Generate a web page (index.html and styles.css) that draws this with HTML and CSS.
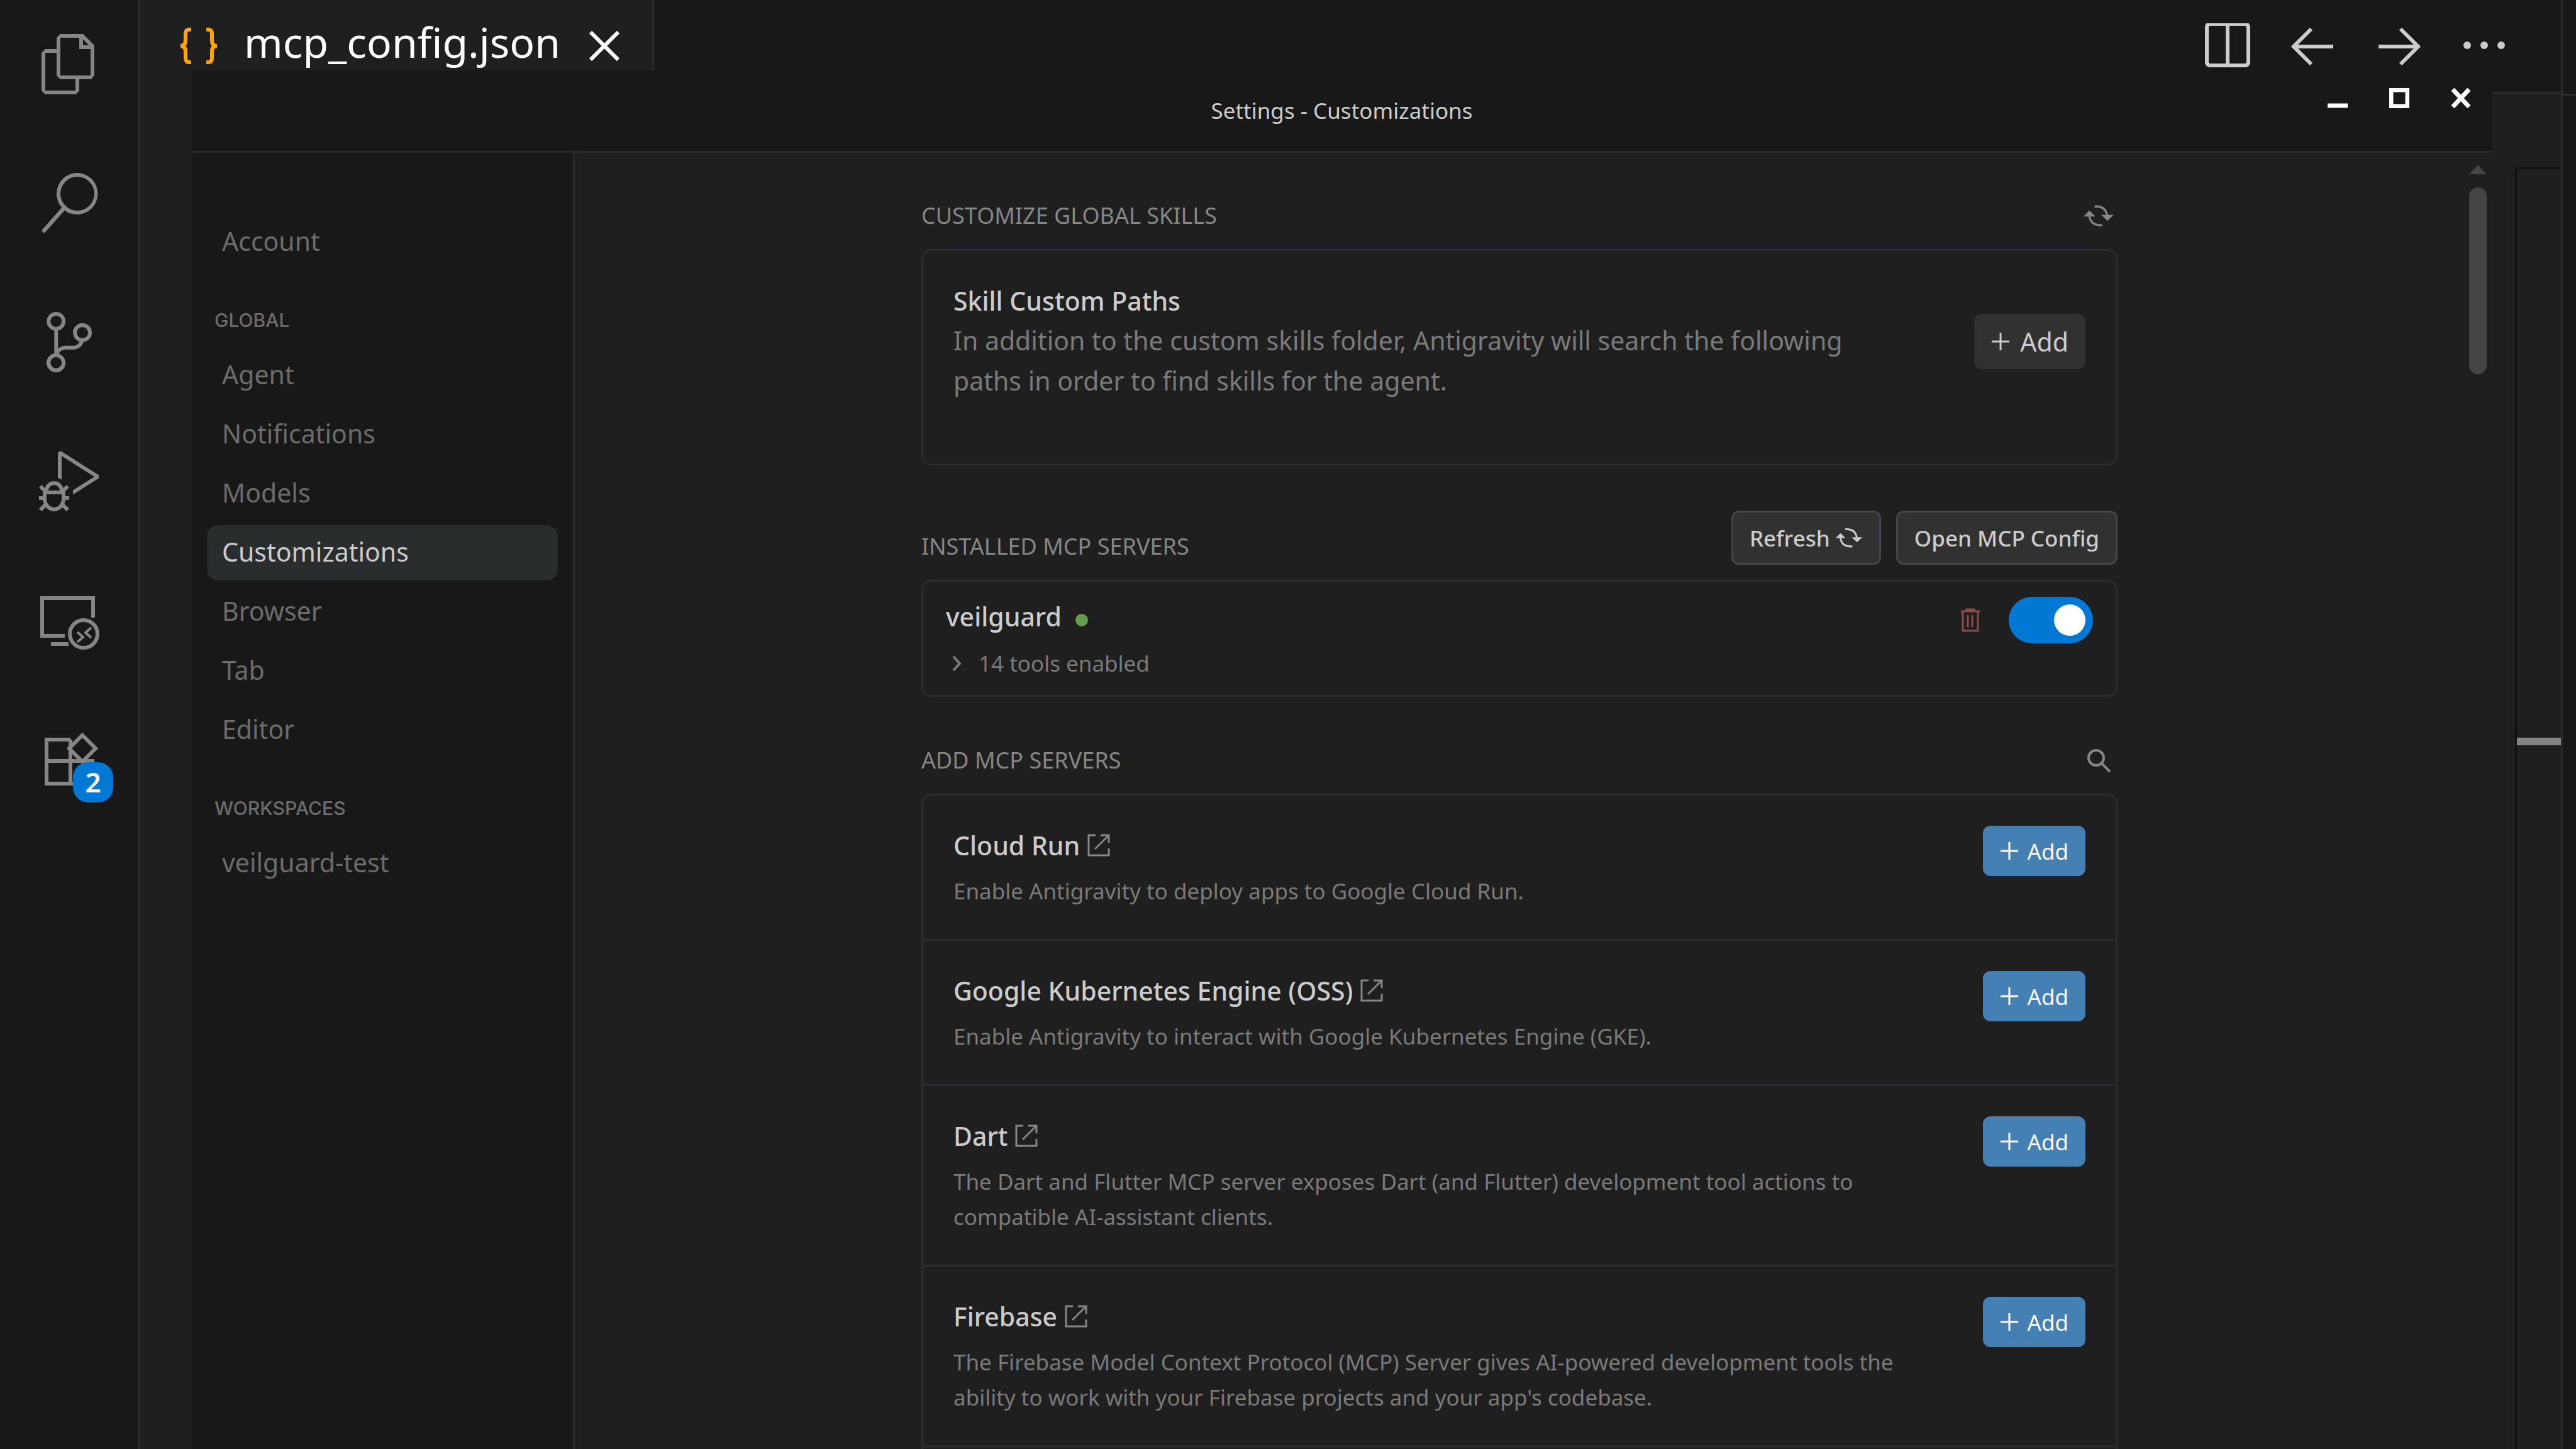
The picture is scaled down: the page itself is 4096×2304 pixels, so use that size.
FILE: index.html
```html
<!DOCTYPE html>
<html lang="en">
<head>
    <meta charset="UTF-8">
    <meta name="viewport" content="width=device-width, initial-scale=1.0">
    <title>Settings - Customizations</title>
    <link rel="stylesheet" href="styles.css">
</head>
<body>
<!-- shared icons -->
<svg class="sprite" aria-hidden="true">
    <symbol id="refresh" viewBox="26 34 216 216">
        <path d="M105 76 Q182 70 195 140 M160 210 Q76 214 68 145" fill="none" stroke="currentColor" stroke-width="15"/>
        <path d="M156 138H238L197 177z M29 146H107L68 106z" fill="currentColor"/>
    </symbol>
    <symbol id="external" viewBox="0 0 36 36">
        <path d="M13 2H2V34H34V23 M21 2H34V14 M34 2L12 24" fill="none" stroke="currentColor" stroke-width="3"/>
    </symbol>
    <symbol id="plus" viewBox="0 0 30 30">
        <path d="M15 1V29M1 15H29" fill="none" stroke="currentColor" stroke-width="3"/>
    </symbol>
</svg>

<div class="workbench">
    <nav class="activity-bar">
        <button class="activity" aria-label="Explorer">
            <svg viewBox="0 0 24 24"><path d="M17.5 0h-9L7 1.5V6H2.5L1 7.5v15.07L2.5 24h12.07L16 22.57V18h4.7l1.3-1.43V4.5L17.5 0zm0 2.12l2.38 2.38H17.5V2.12zm-3 20.38h-12v-15H7v9.07L8.5 18h6v4.5zm6-6h-12v-15H16V6h4.5v10.5z"/></svg>
        </button>
        <button class="activity" aria-label="Search">
            <svg viewBox="0 0 24 24"><path d="M15.25 0a8.25 8.25 0 0 0-6.18 13.72L1 22.88l1.12 1.12 8.05-9.12A8.251 8.251 0 1 0 15.25.01V0zm0 15a6.75 6.75 0 1 1 0-13.5 6.75 6.75 0 0 1 0 13.5z"/></svg>
        </button>
        <button class="activity" aria-label="Source Control">
            <svg viewBox="0 0 24 24"><path d="M21.007 8.222A3.738 3.738 0 0 0 15.045 5.2a3.737 3.737 0 0 0 1.156 6.583 2.988 2.988 0 0 1-2.668 1.67h-2.99a4.456 4.456 0 0 0-2.989 1.165V7.4a3.737 3.737 0 1 0-1.494 0v9.117a3.776 3.776 0 1 0 1.816.099 2.99 2.99 0 0 1 2.668-1.667h2.99a4.484 4.484 0 0 0 4.223-3.039 3.736 3.736 0 0 0 3.25-3.687zM4.565 3.738a2.242 2.242 0 1 1 4.484 0 2.242 2.242 0 0 1-4.484 0zm4.484 16.441a2.242 2.242 0 1 1-4.484 0 2.242 2.242 0 0 1 4.484 0zm8.221-9.715a2.242 2.242 0 1 1 0-4.485 2.242 2.242 0 0 1 0 4.485z"/></svg>
        </button>
        <button class="activity" aria-label="Run and Debug">
            <svg viewBox="0 0 24 24"><path d="M10.94 13.5l-1.32 1.32a3.73 3.73 0 0 0-7.24 0L1.06 13.5 0 14.56l1.72 1.72-.22.22V18H0v1.5h1.5v.08c.077.489.214.966.41 1.42L0 22.94 1.06 24l1.65-1.65A4.308 4.308 0 0 0 6 24a4.31 4.31 0 0 0 3.29-1.65L10.94 24 12 22.94 10.09 21c.198-.464.336-.951.41-1.45v-.1H12V18h-1.5v-1.5l-.22-.22L12 14.56l-1.06-1.06zM6 13.5a2.25 2.25 0 0 1 2.25 2.25h-4.5A2.25 2.25 0 0 1 6 13.5zm3 6a3.33 3.33 0 0 1-3 3 3.33 3.33 0 0 1-3-3v-2.25h6v2.25zm14.76-9.9v1.26L13.5 17.37V15.6l8.5-5.37L9 2v9.46a5.07 5.07 0 0 0-1.5-.72V.63L8.64 0l15.12 9.6z"/></svg>
        </button>
        <button class="activity" aria-label="Remote Explorer">
            <svg class="line" viewBox="0 0 96 96">
                <path d="M86 44V13H5V73H41 M19 86H47" stroke-width="6"/>
                <circle cx="71" cy="70" r="22" stroke-width="6"/>
                <path d="M61 67L70 75L61 83 M83 60L74 68L83 76" stroke-width="4"/>
            </svg>
        </button>
        <button class="activity" aria-label="Extensions">
            <svg class="line" viewBox="0 0 96 96">
                <path d="M50 17H12V87H85V51H12 M50 17V87" stroke-width="6"/>
                <path d="M69 10L90 31L69 52L48 31z" stroke-width="6"/>
            </svg>
            <span class="badge">2</span>
        </button>
    </nav>

    <main class="editor">
        <div class="tab-bar">
            <div class="tab">
                <svg class="braces" viewBox="0 0 64 58"><path d="M20 3H17Q11 3 11 10V20Q11 29 3 29Q11 29 11 38V48Q11 55 17 55H20 M44 3H47Q53 3 53 10V20Q53 29 61 29Q53 29 53 38V48Q53 55 47 55H44"/></svg>
                <span class="tab-name">mcp_config.json</span>
                <button class="tab-close" aria-label="Close tab">
                    <svg viewBox="0 0 48 48"><path d="M2 2L46 46M46 2L2 46"/></svg>
                </button>
            </div>
            <div class="editor-actions">
                <button aria-label="Split editor"><svg viewBox="0 0 72 72"><rect x="3" y="1" width="66" height="66" rx="5"/><path d="M36 1V67"/></svg></button>
                <button aria-label="Back"><svg viewBox="0 0 72 72"><path d="M68 37H6M33 9L5 37L33 65"/></svg></button>
                <button aria-label="Forward"><svg viewBox="0 0 72 72"><path d="M4 37H66M39 9L67 37L39 65"/></svg></button>
                <button aria-label="More"><svg viewBox="0 0 72 72"><g class="dots"><circle cx="9" cy="35" r="6"/><circle cx="36" cy="35" r="6"/><circle cx="63" cy="35" r="6"/></g></svg></button>
            </div>
        </div>
        <div class="editor-body">
            <div class="ruler"><div class="ruler-mark"></div></div>
        </div>
    </main>
    <aside class="side-strip"></aside>
</div>

<section class="dialog" role="dialog" aria-labelledby="dialog-title">
    <header class="title-bar">
        <h1 id="dialog-title">Settings - Customizations</h1>
        <div class="window-buttons">
            <button aria-label="Minimize"><svg viewBox="0 0 32 32"><path d="M0 28H32"/></svg></button>
            <button aria-label="Maximize"><svg viewBox="0 0 32 32"><path d="M3 3H29V29H3z"/></svg></button>
            <button aria-label="Close"><svg viewBox="0 0 32 32"><path d="M3 2L29 30M29 2L3 30"/></svg></button>
        </div>
    </header>
    <div class="dialog-body">
        <nav class="sidebar">
            <a class="nav-item" href="#">Account</a>
            <h2>GLOBAL</h2>
            <a class="nav-item" href="#">Agent</a>
            <a class="nav-item" href="#">Notifications</a>
            <a class="nav-item" href="#">Models</a>
            <a class="nav-item active" href="#">Customizations</a>
            <a class="nav-item" href="#">Browser</a>
            <a class="nav-item" href="#">Tab</a>
            <a class="nav-item" href="#">Editor</a>
            <h2>WORKSPACES</h2>
            <a class="nav-item" href="#">veilguard-test</a>
        </nav>

        <div class="content">
            <section class="group">
                <div class="group-header">
                    <h2>CUSTOMIZE GLOBAL SKILLS</h2>
                    <button class="icon-button" aria-label="Reload skills"><svg><use href="#refresh"/></svg></button>
                </div>
                <div class="card skills">
                    <div class="card-text">
                        <h3>Skill Custom Paths</h3>
                        <p>In addition to the custom skills folder, Antigravity will search the following paths in order to find skills for the agent.</p>
                    </div>
                    <button class="add-path"><svg><use href="#plus"/></svg>Add</button>
                </div>
            </section>

            <section class="group">
                <div class="group-header">
                    <h2>INSTALLED MCP SERVERS</h2>
                    <div class="header-buttons">
                        <button class="secondary">Refresh<svg><use href="#refresh"/></svg></button>
                        <button class="secondary">Open MCP Config</button>
                    </div>
                </div>
                <div class="card installed">
                    <div class="server-row">
                        <label class="server-name" for="veilguard">veilguard</label>
                        <span class="status"></span>
                        <button class="trash" aria-label="Remove veilguard">
                            <svg viewBox="0 0 30 38"><path d="M0 5H30M9 5V2H21V5M3 5V36H27V5M11 11V30M18 11V30"/></svg>
                        </button>
                        <input type="checkbox" class="toggle" id="veilguard" checked>
                    </div>
                    <button class="tools">
                        <svg viewBox="0 0 14 26"><path d="M2 2L12 13L2 24"/></svg>14 tools enabled
                    </button>
                </div>
            </section>

            <section class="group">
                <div class="group-header">
                    <h2>ADD MCP SERVERS</h2>
                    <button class="icon-button" aria-label="Search servers">
                        <svg viewBox="0 0 48 48"><circle cx="20" cy="20" r="12"/><path d="M28 28L42 42"/></svg>
                    </button>
                </div>
                <ul class="card server-list">
                    <li>
                        <div class="card-text">
                            <h3><a href="#">Cloud Run<svg><use href="#external"/></svg></a></h3>
                            <p>Enable Antigravity to deploy apps to Google Cloud Run.</p>
                        </div>
                        <button class="add"><svg><use href="#plus"/></svg>Add</button>
                    </li>
                    <li>
                        <div class="card-text">
                            <h3><a href="#">Google Kubernetes Engine (OSS)<svg><use href="#external"/></svg></a></h3>
                            <p>Enable Antigravity to interact with Google Kubernetes Engine (GKE).</p>
                        </div>
                        <button class="add"><svg><use href="#plus"/></svg>Add</button>
                    </li>
                    <li>
                        <div class="card-text">
                            <h3><a href="#">Dart<svg><use href="#external"/></svg></a></h3>
                            <p>The Dart and Flutter MCP server exposes Dart (and Flutter) development tool actions to compatible AI-assistant clients.</p>
                        </div>
                        <button class="add"><svg><use href="#plus"/></svg>Add</button>
                    </li>
                    <li>
                        <div class="card-text">
                            <h3><a href="#">Firebase<svg><use href="#external"/></svg></a></h3>
                            <p>The Firebase Model Context Protocol (MCP) Server gives AI-powered development tools the ability to work with your Firebase projects and your app's codebase.</p>
                        </div>
                        <button class="add"><svg><use href="#plus"/></svg>Add</button>
                    </li>
                </ul>
            </section>
        </div>

        <div class="scrollbar">
            <div class="scroll-up"></div>
            <div class="scroll-thumb"></div>
        </div>
    </div>
</section>
</body>
</html>
```
FILE: styles.css
```css
* {
    box-sizing: border-box;
}

body {
    margin: 0;
    height: 100vh;
    overflow: hidden;
    position: relative;
    font-family: "Noto Sans", "Open Sans", sans-serif;
    background-color: #1f1f1f;
    color: #cccccc;
}

h1, h2, h3, p, ul {
    margin: 0;
    padding: 0;
    font-weight: 400;
}

a {
    color: inherit;
    text-decoration: none;
}

button {
    display: flex;
    align-items: center;
    justify-content: center;
    padding: 0;
    border: none;
    background: none;
    color: inherit;
    font: inherit;
    cursor: pointer;
}

.sprite {
    display: none;
}

/* Editor window */
.workbench {
    display: flex;
    height: 100%;
}

.activity-bar {
    width: 222px;
    padding-top: 54px;
    display: flex;
    flex-direction: column;
    gap: 125px;
    background-color: #181818;
    border-right: 3px solid #2b2b2b;
}

.activity {
    position: relative;
    color: #868686;
}

.activity svg {
    width: 96px;
    height: 96px;
    fill: currentColor;
}

.activity svg.line {
    fill: none;
    stroke: currentColor;
}

.badge {
    position: absolute;
    left: 116px;
    top: 53px;
    width: 64px;
    height: 64px;
    line-height: 62px;
    border-radius: 24px;
    background-color: #0078d4;
    color: #ffffff;
    font-size: 44px;
    font-weight: 600;
    text-align: center;
}

.editor {
    flex: 1;
    display: flex;
    flex-direction: column;
}

.tab-bar {
    height: 149px;
    display: flex;
    justify-content: space-between;
    background-color: #181818;
    border-bottom: 3px solid #2b2b2b;
}

/* the open tab runs over the bar's bottom border */
.tab {
    display: flex;
    align-items: center;
    margin-bottom: -3px;
    padding: 0 52px 4px 62px;
    background-color: #1f1f1f;
    border-right: 3px solid #2b2b2b;
    color: #ffffff;
}

.braces {
    width: 64px;
    height: 58px;
    fill: none;
    stroke: #ffa409;
    stroke-width: 6;
}

.tab-name {
    margin: 0 46px 0 40px;
    padding-bottom: 14px;
    font-size: 66px;
    line-height: 128px;
}

.tab-close svg {
    width: 48px;
    height: 48px;
    stroke: #ffffff;
    stroke-width: 6;
}

.editor-actions {
    display: flex;
    padding-right: 54px;
}

.editor-actions button {
    width: 136px;
}

.editor-actions svg {
    width: 72px;
    height: 72px;
    fill: none;
    stroke: #cccccc;
    stroke-width: 6;
}

.editor-actions .dots {
    fill: #cccccc;
    stroke: none;
}

.editor-body {
    flex: 1;
    padding-top: 117px;
    display: flex;
    justify-content: flex-end;
}

.ruler {
    width: 73px;
    padding-top: 904px;
    border-left: 3px solid #0f1012;
    border-top: 3px solid #0f1012;
}

.ruler-mark {
    height: 12px;
    background-color: #848482;
}

.side-strip {
    width: 24px;
    background-color: #181818;
    border-left: 3px solid #2b2b2b;
}

.side-strip::before {
    content: '';
    display: block;
    height: 149px;
    border-bottom: 3px solid #2b2b2b;
}

/* Settings window, floats over the editor */
.dialog {
    position: absolute;
    left: 305px;
    right: 134px;
    top: 112px;
    bottom: 0;
    display: flex;
    flex-direction: column;
    background-color: #1f1f1f;
    overflow: hidden;
}

.title-bar {
    display: grid;
    grid-template-columns: 1fr auto 1fr;
    background-color: #181818;
    border-bottom: 3px solid #2b2c2f;
}

.title-bar h1 {
    grid-column: 2;
    font-size: 35px;
    line-height: 128px;
}

.window-buttons {
    display: flex;
    justify-content: flex-end;
    align-items: flex-start;
}

.window-buttons button {
    width: 98px;
    height: 88px;
}

.window-buttons svg {
    width: 32px;
    height: 32px;
    fill: none;
    stroke: #ffffff;
    stroke-width: 7;
}

.dialog-body {
    flex: 1;
    min-height: 0;
    display: flex;
}

.sidebar {
    width: 609px;
    padding: 98px 24px 0;
    display: flex;
    flex-direction: column;
    gap: 6px;
    background-color: #181818;
    border-right: 3px solid #2b2c2f;
    color: #6c6c6c;
}

.nav-item {
    padding: 0 24px 4px;
    border-radius: 18px;
    font-size: 41px;
    line-height: 84px;
}

.nav-item.active {
    background-color: #292d2e;
    color: #cccccc;
}

.sidebar h2 {
    padding: 0 12px;
    margin: 58px 0 22px;
    font-family: Inter, "Noto Sans", sans-serif;
    font-size: 30px;
    font-weight: 500;
    line-height: 32px;
}

.content {
    flex: 1;
    padding-top: 71px;
    display: flex;
    flex-direction: column;
    align-items: center;
    gap: 72px;
    overflow: hidden;
}

.group {
    width: 1902px;
}

.group-header {
    display: flex;
    justify-content: space-between;
    align-items: flex-end;
    margin-bottom: 24px;
    color: #868686;
}

.group-header h2 {
    font-size: 36px;
    line-height: 58px;
}

.icon-button {
    width: 60px;
    height: 58px;
}

.icon-button svg {
    width: 48px;
    height: 48px;
    fill: none;
    stroke: currentColor;
    stroke-width: 4;
}

.header-buttons {
    display: flex;
    gap: 24px;
}

.secondary {
    height: 86px;
    padding: 0 26px;
    border: 3px solid #45454a;
    border-radius: 12px;
    background-color: #313131;
    color: #cccccc;
    font-size: 35px;
    font-weight: 500;
}

.secondary svg {
    width: 44px;
    height: 44px;
    margin-left: 8px;
}

.card {
    border: 3px solid #2b2c2f;
    border-radius: 16px;
}

.card h3 {
    font-size: 41px;
    font-weight: 500;
    line-height: 62px;
    color: #cccccc;
}

.card p {
    color: #7a7a7a;
}

.skills {
    display: flex;
    align-items: center;
    justify-content: space-between;
    padding: 48px 48px 98px;
}

.skills p {
    max-width: 1500px;
    padding-bottom: 2px;
    font-size: 41px;
    line-height: 64px;
}

.add-path {
    height: 88px;
    padding: 0 27px;
    gap: 16px;
    border-radius: 12px;
    background-color: #313131;
    font-size: 41px;
}

.add-path svg,
.add svg {
    width: 30px;
    height: 30px;
}

.installed {
    padding: 24px 36px;
}

.server-row {
    display: flex;
    align-items: center;
    margin-bottom: 6px;
}

.server-name {
    font-size: 41px;
    font-weight: 500;
    line-height: 62px;
    align-self: flex-start;
}

.status {
    width: 20px;
    height: 20px;
    margin-left: 22px;
    margin-right: auto;
    border-radius: 50%;
    background-color: #669c50;
}

.trash {
    margin-right: 46px;
}

.trash svg {
    width: 30px;
    height: 38px;
    fill: none;
    stroke: #8b4c4c;
    stroke-width: 3;
}

.toggle {
    appearance: none;
    width: 134px;
    height: 74px;
    margin: 0;
    padding: 12px;
    display: flex;
    justify-content: flex-end;
    border-radius: 37px;
    background-color: #0078d4;
}

.toggle::before {
    content: '';
    width: 50px;
    height: 50px;
    border-radius: 50%;
    background-color: #ffffff;
}

.tools {
    padding-left: 10px;
    gap: 28px;
    font-size: 35px;
    line-height: 52px;
    color: #7a7a7a;
}

.tools svg {
    width: 14px;
    height: 26px;
    fill: none;
    stroke: currentColor;
    stroke-width: 4;
}

.server-list {
    list-style: none;
    padding-bottom: 48px;
}

.server-list li {
    display: flex;
    justify-content: space-between;
    align-items: flex-start;
    padding: 48px;
    border-bottom: 3px solid #2b2c2f;
}

.server-list .card-text {
    max-width: 1560px;
}

.server-list h3 {
    margin-bottom: 14px;
}

.server-list h3 a {
    display: flex;
    align-items: center;
    gap: 12px;
}

.server-list h3 svg {
    width: 36px;
    height: 36px;
    color: #868686;
}

.server-list p {
    font-size: 35px;
    line-height: 56px;
}

.add {
    height: 80px;
    padding: 0 27px;
    gap: 14px;
    border-radius: 12px;
    background-color: #4580b5;
    color: #ffffff;
    font-size: 35px;
}

.scrollbar {
    width: 44px;
    padding-top: 19px;
    display: flex;
    flex-direction: column;
    align-items: center;
    gap: 21px;
}

.scroll-up {
    border: 14px solid transparent;
    border-top: none;
    border-bottom: 15px solid #454545;
}

.scroll-thumb {
    width: 28px;
    height: 297px;
    border-radius: 14px;
    background-color: #454545;
}
```
